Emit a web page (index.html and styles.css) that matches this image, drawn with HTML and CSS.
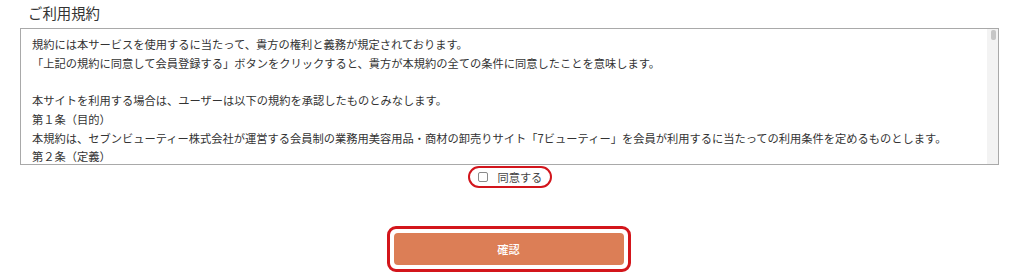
FILE: index.html
```html
<!DOCTYPE html>
<html lang="ja">
<head>
<meta charset="utf-8">
<link rel="stylesheet" href="styles.css">
</head>
<body>
<div class="page">
  <h2 class="title">ご利用規約</h2>
  <div class="terms">
    <div class="terms-text">
      <p>規約には本サービスを使用するに当たって、貴方の権利と義務が規定されております。</p>
      <p>「上記の規約に同意して会員登録する」ボタンをクリックすると、貴方が本規約の全ての条件に同意したことを意味します。</p>
      <p>&nbsp;</p>
      <p>本サイトを利用する場合は、ユーザーは以下の規約を承認したものとみなします。</p>
      <p>第１条（目的）</p>
      <p>本規約は、セブンビューティー株式会社が運営する会員制の業務用美容用品・商材の卸売りサイト「7ビューティー」を会員が利用するに当たっての利用条件を定めるものとします。</p>
      <p>第２条（定義）</p>
    </div>
    <div class="scrollbar"><div class="thumb"></div></div>
  </div>
  <div class="agree-row">
    <label class="agree">
      <span class="box"></span>
      <span class="agree-label">同意する</span>
    </label>
  </div>
  <div class="submit-row">
    <div class="submit-ring">
      <button class="submit" type="button">確認</button>
    </div>
  </div>
</div>
</body>
</html>
```

FILE: styles.css
```css
* { box-sizing: border-box; }
html, body { margin: 0; padding: 0; background: #fff; }
body {
  font-family: "Noto Sans CJK JP", "Noto Sans", sans-serif;
  color: #333;
  width: 1020px;
  height: 275px;
  overflow: hidden;
}
.page { padding: 0 21px 0 20px; }
.title {
  margin: 0;
  padding: 3px 0 0 8px;
  height: 28px;
  font-size: 14.4px;
  font-weight: normal;
  line-height: 20px;
  color: #333;
}
.terms {
  display: flex;
  height: 137px;
  border: 1px solid #a9a9a9;
  background: #fff;
}
.terms-text {
  flex: 1;
  overflow: hidden;
  padding: 6px 11px;
  font-size: 11.25px;
  line-height: 18.7px;
}
.terms-text p { margin: 0; white-space: nowrap; }
.scrollbar {
  width: 11px;
  background: #f3f3f3;
  padding: 1px 2px 0 4px;
}
.thumb {
  width: 5px;
  height: 10px;
  background: #c6c6c6;
  border-radius: 2px;
}
.agree-row {
  display: flex;
  justify-content: center;
  padding: 1px 0 0 0;
}
.agree {
  display: flex;
  align-items: center;
  gap: 10px;
  width: 84px;
  height: 22px;
  border: 2.5px solid #d2151c;
  border-radius: 11px;
  padding-left: 8px;
  font-size: 11.2px;
  color: #444;
}
.box {
  width: 10px;
  height: 10px;
  border: 1px solid #8a8a8a;
  border-radius: 2px;
  background: #fff;
}
.submit-row {
  display: flex;
  justify-content: center;
  padding-top: 38px;
}
.submit-ring {
  width: 244px;
  height: 46px;
  border: 3px solid #d3151b;
  border-radius: 9px;
  padding: 4px;
  margin-left: -2px;
}
.submit {
  display: block;
  width: 100%;
  height: 100%;
  border: 0;
  border-radius: 4px;
  background: #dc7e56;
  color: #fff;
  font-family: "Noto Sans CJK JP", sans-serif;
  font-size: 11.2px;
  font-weight: 500;
  padding: 0;
}
```
